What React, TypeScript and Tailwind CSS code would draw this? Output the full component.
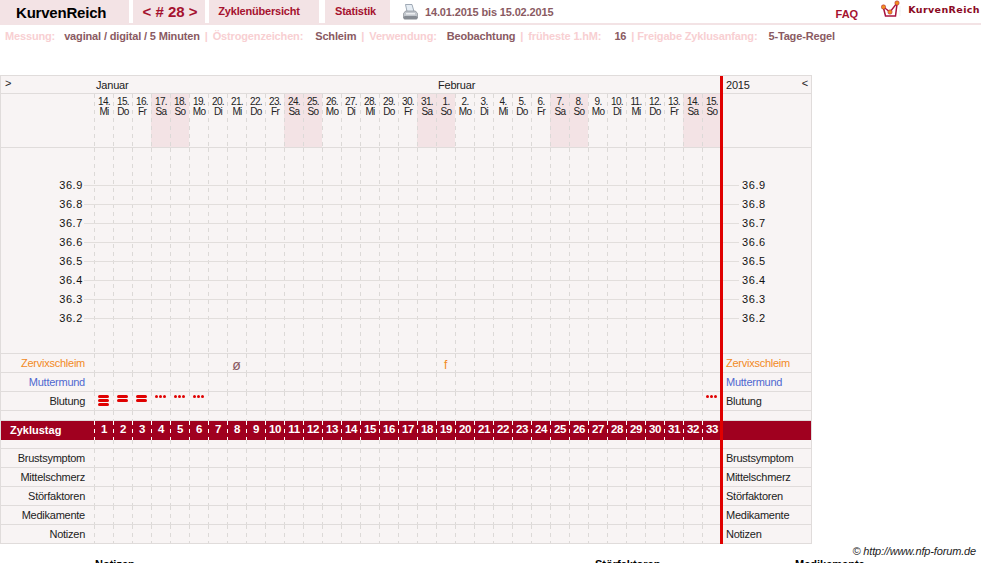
const days = [
  ["14.","Mi"],["15.","Do"],["16.","Fr"],["17.","Sa"],["18.","So"],["19.","Mo"],["20.","Di"],["21.","Mi"],["22.","Do"],["23.","Fr"],["24.","Sa"],["25.","So"],["26.","Mo"],["27.","Di"],["28.","Mi"],["29.","Do"],["30.","Fr"],["31.","Sa"],["1.","So"],["2.","Mo"],["3.","Di"],["4.","Mi"],["5.","Do"],["6.","Fr"],["7.","Sa"],["8.","So"],["9.","Mo"],["10.","Di"],["11.","Mi"],["12.","Do"],["13.","Fr"],["14.","Sa"],["15.","So"],
];
const temps = ["36.9","36.8","36.7","36.6","36.5","36.4","36.3","36.2"];
const isWeekend = (d: string) => d === "Sa" || d === "So";
const dash = "bg-[linear-gradient(#dcd9d7_50%,transparent_50%)] bg-[length:1px_8px] bg-repeat-y bg-left-top";
const dashLight = "bg-[linear-gradient(#ffffff_50%,transparent_50%)] bg-[length:1px_8px] bg-repeat-y bg-left-top";

function Cell({ children, light }: { children?: React.ReactNode; light?: boolean }) {
  return (
    <div className={`relative w-[19px] h-full shrink-0 flex items-center justify-center pl-px ${light ? dashLight : dash}`}>
      {children}
    </div>
  );
}

function Bar() {
  return <div className="w-[3px] -ml-[1px] h-[calc(100%+1px)] bg-[#e00000] shrink-0 relative z-10" />;
}

function Row({ left, right, color, cells, h = "h-[19px]" }: { left?: string; right?: string; color?: string; cells?: Record<number, React.ReactNode>; h?: string }) {
  return (
    <div className={`flex ${h} border-b border-[#e0dcdb] box-border tracking-[-0.25px]`}>
      <div className={`w-[84px] mr-[9px] shrink-0 text-right leading-[18px] whitespace-nowrap ${color ?? "text-[#222]"}`}>{left}</div>
      {days.map((_, i) => <Cell key={i}>{cells?.[i]}</Cell>)}
      <Bar />
      <div className={`pl-[3px] leading-[18px] whitespace-nowrap ${color ?? "text-[#222]"}`}>{right}</div>
    </div>
  );
}

const Stripes = ({ n }: { n: number }) => (
  <div className="flex flex-col gap-[1px] self-start mt-[3px] -ml-[1px]">
    {Array.from({ length: n }).map((_, i) => <div key={i} className="w-[11px] h-[3px] rounded-full bg-[#e00000]" />)}
  </div>
);
const Dots = () => (
  <div className="flex gap-[1px] self-start mt-[3px] -ml-[1px]">
    {[0, 1, 2].map((i) => <div key={i} className="w-[3px] h-[3px] rounded-full bg-[#e00000]" />)}
  </div>
);

function Printer() {
  return (
    <svg width="15" height="18" viewBox="0 0 15 18" className="shrink-0">
      <path d="M2.5 1.5h6.5l2 7H4z" fill="#e6edf4" stroke="#8a97a5" strokeWidth="0.8" />
      <path d="M0.5 10.5l2-2.5h10l2 2.5v4.5H0.5z" fill="#c2c7cd" stroke="#7b8087" strokeWidth="0.6" />
      <rect x="0.5" y="13" width="14" height="3.5" rx="1.5" fill="#868b92" />
      <rect x="3" y="10" width="9" height="1.5" fill="#eceef0" />
    </svg>
  );
}

function Logo() {
  return (
    <svg width="20" height="20" viewBox="0 0 20 20" className="shrink-0">
      <path d="M18 11h2M19 6v10" stroke="#ececec" strokeWidth="0.7" fill="none" />
      <path d="M2.5 8l2 8h10L16 4" fill="none" stroke="#a8123f" strokeWidth="1.5" />
      <path d="M2.5 7L9 12l7-9" fill="none" stroke="#a8123f" strokeWidth="1.3" />
      <circle cx="2.5" cy="7" r="2.2" fill="#f09020" stroke="#a8123f" strokeWidth="0.5" />
      <circle cx="9" cy="12" r="2.2" fill="#f09020" stroke="#a8123f" strokeWidth="0.5" />
      <circle cx="16" cy="3" r="2.2" fill="#f09020" stroke="#a8123f" strokeWidth="0.5" />
    </svg>
  );
}

export default function App() {
  const tab = "bg-[#f3e3e5] h-[23px] flex items-center justify-center font-bold text-[#a5122f]";
  const lbl = "text-[#f8cfd2]";
  const val = "text-[#8a5a62]";
  return (
    <div className="w-[981px] h-[563px] overflow-hidden bg-white text-[11px] relative" style={{ fontFamily: '"Liberation Sans", Arial, sans-serif' }}>
      {/* header */}
      <div className="flex h-[25px] border-b-[2px] border-[#f3e3e5] box-border">
        <div className="bg-[#f3e3e5] w-[129px] h-[23px] flex items-center pl-[16px] pt-[3px] font-bold text-[15px] tracking-[-0.2px] text-black">KurvenReich</div>
        <div className={`${tab} w-[72px] ml-[4px] text-[15px] pt-[1px] pl-[2px]`}>&lt; # 28 &gt;</div>
        <div className={`${tab} w-[110px] ml-[4px] tracking-[-0.2px] pr-[10px]`}>Zyklenübersicht</div>
        <div className={`${tab} w-[65px] ml-[6px] tracking-[-0.2px] pr-[4px]`}>Statistik</div>
        <div className="ml-[13px] mt-[3px]"><Printer /></div>
        <div className="ml-[7px] font-bold text-[#8a5a62] leading-[24px] tracking-[-0.15px]">14.01.2015 bis 15.02.2015</div>
        <div className="ml-auto flex">
          <div className="font-bold text-[#a5122f] mt-[8px] leading-[13px]">FAQ</div>
          <div className="ml-[23px]"><Logo /></div>
          <div className="ml-[7px] mr-[1px] mt-[4px] font-bold text-[#8b0a24] tracking-[0.4px] leading-[12px] text-[9.5px]" style={{ fontFamily: '"DejaVu Sans", sans-serif' }}>KurvenReich</div>
        </div>
      </div>
      <div className="h-[24px] pl-[5px] flex items-center font-bold whitespace-nowrap tracking-[-0.15px] pb-[1px]">
        <span className={lbl}>Messung:</span><span className={`${val} ml-[9px]`}>vaginal / digital / 5 Minuten</span>
        <span className={`${lbl} ml-[5px]`}>|</span><span className={`${lbl} ml-[5px]`}>Östrogenzeichen:</span><span className={`${val} ml-[12px]`}>Schleim</span>
        <span className={`${lbl} ml-[5px]`}>|</span><span className={`${lbl} ml-[5px]`}>Verwendung:</span><span className={`${val} ml-[10px]`}>Beobachtung</span>
        <span className={`${lbl} ml-[5px]`}>|</span><span className={`${lbl} ml-[5px]`}>früheste 1.hM:</span><span className={`${val} ml-[13px]`}>16</span>
        <span className={`${lbl} ml-[5px]`}>|</span><span className={`${lbl} ml-[3px]`}>Freigabe Zyklusanfang:</span><span className={`${val} ml-[11px]`}>5-Tage-Regel</span>
      </div>

      {/* chart */}
      <div className="mt-[26px] w-[812px] bg-[#f8f4f4] border-t border-x border-[#e0dcdb] box-border text-[#222]">
        {/* month row */}
        <div className="flex h-[18px] border-b border-[#e0dcdb] box-border relative tracking-[-0.2px]">
          <div className="w-[94px] pl-[4px] leading-[14px] shrink-0">&gt;</div>
          <div className="w-[343px] pl-[1px] shrink-0 leading-[19px]">Januar</div>
          <div className="w-[282px] shrink-0 leading-[19px]">Februar</div>
          <div className="w-[3px] bg-[#e00000] shrink-0 h-[calc(100%+1px)]" />
          <div className="pl-[3px] leading-[19px]">2015</div>
          <div className="ml-auto pr-[3px] leading-[14px]">&lt;</div>
        </div>
        {/* day row */}
        <div className="flex h-[54px] border-b border-[#e0dcdb] box-border">
          <div className="w-[93px] shrink-0" />
          {days.map(([d, w], i) => (
            <div key={i} className={`w-[19px] shrink-0 pl-px text-center text-[10px] leading-[10px] pt-[3px] tracking-[-0.7px] bg-[linear-gradient(#dcd9d7_50%,transparent_50%)] bg-[length:1px_8px] bg-repeat-y bg-left-top ${isWeekend(w) ? "bg-[#f3e3e5]" : ""}`}>
              <div>{d}</div><div>{w}</div>
            </div>
          ))}
          <Bar />
        </div>
        {/* temperature */}
        <div className="relative flex h-[206px] border-b border-[#e0dcdb] box-border">
          <div className="w-[93px] shrink-0" />
          {days.map((_, i) => <Cell key={i} />)}
          <Bar />
          <div className="absolute inset-x-0 top-[28px] flex flex-col text-[#111]">
            {temps.map((t) => (
              <div key={t} className="flex items-center h-[19px]">
                <div className="w-[83px] text-right pr-[1px] tracking-[0.6px]">{t}</div>
                <div className="w-[636px] h-px bg-[#e2dedc]" />
                <div className="w-[16px] h-px bg-[#e2dedc] ml-[3px]" />
                <div className="pl-[3px] tracking-[0.6px]">{t}</div>
              </div>
            ))}
          </div>
        </div>
        <Row left="Zervixschleim" right="Zervixschleim" color="text-[#f28a1e]" cells={{ 7: <span className="text-[14px] text-[#8a5a62] leading-none mt-[3px] -ml-[1px]">ø</span>, 18: <span className="text-[12px] text-[#f28a1e] leading-none mt-[3px] -ml-[1px]">f</span> }} />
        <Row left="Muttermund" right="Muttermund" color="text-[#4f68d0]" />
        <Row left="Blutung" right="Blutung" cells={{ 0: <Stripes n={3} />, 1: <Stripes n={2} />, 2: <Stripes n={2} />, 3: <Dots />, 4: <Dots />, 5: <Dots />, 32: <Dots /> }} />
        <Row h="h-[10px]" />
        {/* cycle day */}
        <div className="flex h-[19px] bg-[#a0001f] text-white font-bold box-border">
          <div className="w-[93px] pl-[9px] leading-[18px] shrink-0 text-[11px]">Zyklustag</div>
          {days.map((_, i) => <Cell key={i} light><span className="text-[11.5px] tracking-[-0.3px] -mt-px">{i + 1}</span></Cell>)}
          <div className="w-[3px] -ml-[1px] bg-[#e00000] shrink-0" />
        </div>
        <Row h="h-[9px]" />
        <Row left="Brustsymptom" right="Brustsymptom" />
        <Row left="Mittelschmerz" right="Mittelschmerz" />
        <Row left="Störfaktoren" right="Störfaktoren" />
        <Row left="Medikamente" right="Medikamente" />
        <Row left="Notizen" right="Notizen" />
      </div>
      <div className="absolute right-[5px] top-[545px] italic text-[#222] leading-[13px] tracking-[-0.15px]">© http://www.nfp-forum.de</div>
      <div className="flex font-bold text-black pl-[95px] mt-[14px] leading-[13px]">
        <div className="w-[500px]">Notizen</div>
        <div className="w-[200px]">Störfaktoren</div>
        <div>Medikamente</div>
      </div>
    </div>
  );
}
